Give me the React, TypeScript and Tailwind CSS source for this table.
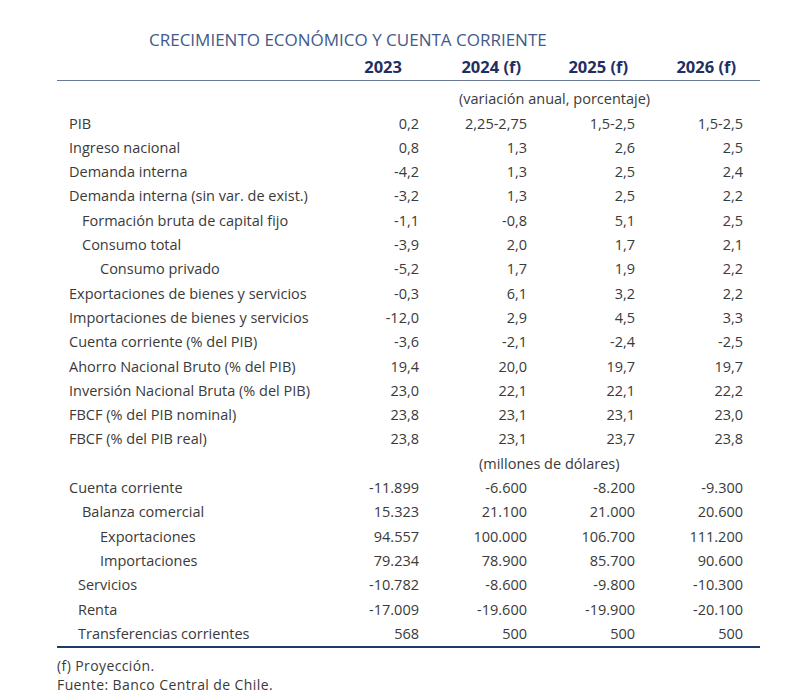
import React from "react";

type Row = { label: string; indent: number; vals: string[] };

const pct: Row[] = [
  { label: "PIB", indent: 0, vals: ["0,2", "2,25-2,75", "1,5-2,5", "1,5-2,5"] },
  { label: "Ingreso nacional", indent: 0, vals: ["0,8", "1,3", "2,6", "2,5"] },
  { label: "Demanda interna", indent: 0, vals: ["-4,2", "1,3", "2,5", "2,4"] },
  { label: "Demanda interna (sin var. de exist.)", indent: 0, vals: ["-3,2", "1,3", "2,5", "2,2"] },
  { label: "Formación bruta de capital fijo", indent: 1, vals: ["-1,1", "-0,8", "5,1", "2,5"] },
  { label: "Consumo total", indent: 1, vals: ["-3,9", "2,0", "1,7", "2,1"] },
  { label: "Consumo privado", indent: 2, vals: ["-5,2", "1,7", "1,9", "2,2"] },
  { label: "Exportaciones de bienes y servicios", indent: 0, vals: ["-0,3", "6,1", "3,2", "2,2"] },
  { label: "Importaciones de bienes y servicios", indent: 0, vals: ["-12,0", "2,9", "4,5", "3,3"] },
  { label: "Cuenta corriente (% del PIB)", indent: 0, vals: ["-3,6", "-2,1", "-2,4", "-2,5"] },
  { label: "Ahorro Nacional Bruto (% del PIB)", indent: 0, vals: ["19,4", "20,0", "19,7", "19,7"] },
  { label: "Inversión Nacional Bruta (% del PIB)", indent: 0, vals: ["23,0", "22,1", "22,1", "22,2"] },
  { label: "FBCF (% del PIB nominal)", indent: 0, vals: ["23,8", "23,1", "23,1", "23,0"] },
  { label: "FBCF (% del PIB real)", indent: 0, vals: ["23,8", "23,1", "23,7", "23,8"] },
];

const usd: Row[] = [
  { label: "Cuenta corriente", indent: 0, vals: ["-11.899", "-6.600", "-8.200", "-9.300"] },
  { label: "Balanza comercial", indent: 1, vals: ["15.323", "21.100", "21.000", "20.600"] },
  { label: "Exportaciones", indent: 2, vals: ["94.557", "100.000", "106.700", "111.200"] },
  { label: "Importaciones", indent: 2, vals: ["79.234", "78.900", "85.700", "90.600"] },
  { label: "Servicios", indent: 3, vals: ["-10.782", "-8.600", "-9.800", "-10.300"] },
  { label: "Renta", indent: 3, vals: ["-17.009", "-19.600", "-19.900", "-20.100"] },
  { label: "Transferencias corrientes", indent: 3, vals: ["568", "500", "500", "500"] },
];

function indentClass(i: number) {
  if (i === 1) return "pl-[25px]";
  if (i === 2) return "pl-[43px]";
  if (i === 3) return "pl-[21px]";
  return "pl-[12px]";
}

function DataRow({ r }: { r: Row }) {
  return (
    <div className="grid grid-cols-[254px_108px_108px_108px_108px] h-[24.3px] items-center">
      <div className={`${indentClass(r.indent)} whitespace-nowrap`}>{r.label}</div>
      {r.vals.map((v, i) => (
        <div key={i} className="text-right whitespace-nowrap">
          {v}
        </div>
      ))}
    </div>
  );
}

export default function App() {
  return (
    <div
      className="w-[800px] h-[694px] bg-white text-[#3a3a3a] text-[14.5px] overflow-hidden"
      style={{ fontFamily: '"Open Sans", "Noto Sans", sans-serif' }}
    >
      <div className="ml-[57px] w-[703px] pt-[28px]">
        <div className="pl-[92px] h-[24px] leading-[24px] text-[17px] text-[#3f5a8a] whitespace-nowrap">
          CRECIMIENTO ECONÓMICO Y CUENTA CORRIENTE
        </div>
        <div className="grid grid-cols-[254px_108px_108px_108px_108px] h-[29px] pt-[3px] leading-[24px] border-b border-[#6b7a99] font-bold text-[16.5px] text-[#1f2f5f]">
          <div></div>
          <div className="text-right pr-[17px]">2023</div>
          <div className="text-right pr-[6px]">2024 (f)</div>
          <div className="text-right pr-[7px]">2025 (f)</div>
          <div className="text-right pr-[7px]">2026 (f)</div>
        </div>
        <div className="pt-[6px]">
          <div className="h-[24.3px] flex items-center pl-[402px] whitespace-nowrap">
            (variación anual, porcentaje)
          </div>
          {pct.map((r) => (
            <DataRow key={r.label} r={r} />
          ))}
          <div className="h-[24.3px] flex items-center pl-[422px] whitespace-nowrap">
            (millones de dólares)
          </div>
          {usd.map((r) => (
            <DataRow key={r.label} r={r} />
          ))}
        </div>
        <div className="border-b-2 border-[#1f3b6e]"></div>
        <div className="pt-[8px] text-[14px] leading-[19px] tracking-[0.4px]">
          <div>(f) Proyección.</div>
          <div>Fuente: Banco Central de Chile.</div>
        </div>
      </div>
    </div>
  );
}
